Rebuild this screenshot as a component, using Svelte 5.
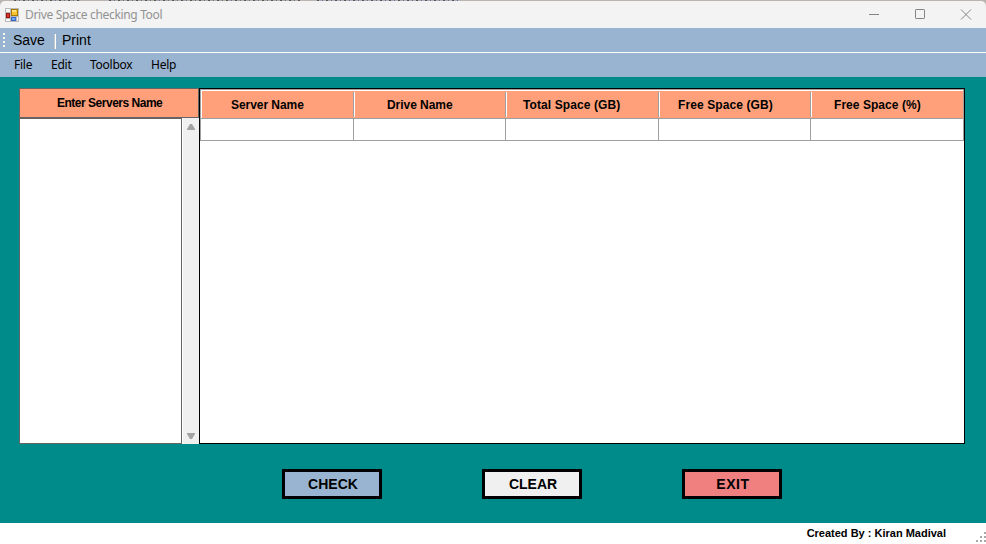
<script>
  const columns = [
    { name: 'Server Name', width: 152, pad: 30, spacing: -0.05 },
    { name: 'Drive Name', width: 152, pad: 34, spacing: -0.05 },
    { name: 'Total Space (GB)', width: 153, pad: 18, spacing: 0.1 },
    { name: 'Free Space (GB)', width: 152, pad: 20, spacing: 0.1 },
    { name: 'Free Space (%)', width: 153, pad: 24, spacing: 0.05 }
  ];
  const actions = [
    { name: 'CHECK', kind: 'check' },
    { name: 'CLEAR', kind: 'clear' },
    { name: 'EXIT', kind: 'exit' }
  ];
</script>

<div class="window">
  <header class="titlebar">
    <svg class="app-icon" width="14" height="14" viewBox="0 0 14 14" shape-rendering="crispEdges">
      <rect width="14" height="14" fill="#b9b9b9" />
      <rect x="1" y="1" width="4" height="3" fill="#f7f7f7" />
      <rect x="1" y="11" width="4" height="2" fill="#f7f7f7" />
      <rect x="12" y="9" width="1" height="4" fill="#f7f7f7" />
      <rect x="6" y="1" width="7" height="7" fill="#a87808" />
      <rect x="7" y="2" width="5" height="5" fill="#f6c42b" />
      <rect x="7" y="2" width="4" height="2" fill="#ffe07a" />
      <rect x="1" y="5" width="4" height="5" fill="#9c1712" />
      <rect x="2" y="6" width="2" height="3" fill="#d8372d" />
      <rect x="6" y="9" width="5" height="4" fill="#3569c8" />
      <rect x="7" y="10" width="3" height="2" fill="#75a6f6" />
    </svg>
    <span class="title">Drive Space checking Tool</span>
    <div class="controls">
      <svg width="12" height="12" viewBox="0 0 12 12"><path d="M1 5.5h10" /></svg>
      <svg width="12" height="12" viewBox="0 0 12 12"><rect x="1.5" y=".5" width="9" height="9" rx=".6" /></svg>
      <svg width="12" height="12" viewBox="0 0 12 12"><path d="M1 .5l10 10M11 .5L1 10.5" /></svg>
    </div>
  </header>

  <div class="toolbar">
    <div class="grip"><i></i><i></i><i></i><i></i></div>
    <span class="save">Save</span>
    <div class="separator"></div>
    <span class="print">Print</span>
  </div>

  <nav class="menu">
    <span style:width="37px">File</span>
    <span style:width="39px">Edit</span>
    <span style:width="61px">Toolbox</span>
    <span>Help</span>
  </nav>

  <main>
    <div class="panels">
      <section class="servers">
        <div class="servers-head"><span>Enter Servers Name</span></div>
        <div class="entry">
          <div class="field"></div>
          <div class="scrollbar">
            <svg width="8" height="6" viewBox="0 0 8 6"><path d="M0 6V5l3-5h2l3 5v1z" /></svg>
            <svg width="8" height="6" viewBox="0 0 8 6"><path d="M0 0v1l3 5h2l3-5V0z" /></svg>
          </div>
        </div>
      </section>
      <section class="grid">
        <div class="grid-head">
          {#each columns as col}
            <div class="th" style:width="{col.width}px" style:padding-left="{col.pad}px">
              <span style:letter-spacing="{col.spacing}px">{col.name}</span>
            </div>
          {/each}
        </div>
        <div class="grid-row">
          {#each columns as col}
            <div class="td" style:width="{col.width}px"></div>
          {/each}
        </div>
      </section>
    </div>
    <div class="actions">
      {#each actions as action}
        <button class={action.kind}>{action.name}</button>
      {/each}
    </div>
  </main>

  <footer>
    <span>Created By : Kiran Madival</span>
    <svg width="10" height="10" viewBox="0 0 10 10" shape-rendering="crispEdges">
      <path d="M8 0h2v2h-2zM4 4h2v2h-2zM8 4h2v2h-2zM0 8h2v2h-2zM4 8h2v2h-2zM8 8h2v2h-2z" fill="#a8a8a8" />
    </svg>
  </footer>
</div>

<style>
  * { box-sizing: border-box; }
  .window {
    width: 986px;
    height: 544px;
    display: flex;
    flex-direction: column;
    overflow: hidden;
    color: #000;
    padding-top: 1px;
    background:
      repeating-linear-gradient(90deg, #5c5652 0 2px, #a9a7ae 2px 5px, #6b7486 5px 6px, #b5b0ad 6px 9px) 14px 0 / 66px 1px no-repeat,
      repeating-linear-gradient(90deg, #5c5652 0 2px, #a9a7ae 2px 5px, #6b7486 5px 6px, #b5b0ad 6px 9px) 109px 0 / 191px 1px no-repeat,
      repeating-linear-gradient(90deg, #5c5652 0 2px, #a9abb8 2px 5px, #6b7486 5px 6px, #b0b2c0 6px 9px) 317px 0 / 143px 1px no-repeat,
      linear-gradient(#bab5b0 6px, #fff 6px);
    font-family: "Liberation Sans", Arial, sans-serif;
  }
  span { white-space: nowrap; }
  .titlebar {
    height: 27px;
    flex: none;
    display: flex;
    align-items: center;
    padding: 0 14px 0 5px;
    background: #f3f3f3;
    border-radius: 5px 5px 0 0;
  }
  .title {
    margin-left: 6px;
    font: 12px/16px "Noto Sans", sans-serif;
    color: #929292;
    letter-spacing: -0.34px;
  }
  .controls { margin-left: auto; display: flex; gap: 34px; }
  .controls:first-child { margin-right: 0; }
  .controls svg { display: block; fill: none; stroke: #858585; stroke-width: 1; }
  .toolbar {
    height: 25px;
    flex: none;
    display: flex;
    align-items: center;
    padding-left: 3px;
    background: #99b4d1;
    border-bottom: 1px solid #fff;
    font-size: 14px;
    line-height: 16px;
  }
  .grip { display: flex; flex-direction: column; gap: 2px; width: 10px; }
  .grip i { width: 2px; height: 2px; background: #f5f5f5; }
  .save { width: 41px; }
  .separator { width: 2px; height: 15px; margin: 2px 6px 0 0; background: #fff; border-left: 1px solid #c6c6c6; }
  .menu {
    height: 24px;
    flex: none;
    display: flex;
    align-items: center;
    padding-left: 14px;
    background: #99b4d1;
    font: 12px/16px "Noto Sans", sans-serif;
    letter-spacing: -0.25px;
  }
  main { height: 446px; flex: none; background: #008b8b; padding: 11px 21px 0 19px; }
  .panels { display: flex; height: 356px; }
  .servers { width: 180px; display: flex; flex-direction: column; }
  .servers-head {
    height: 30px;
    border: 1px solid #646464;
    background: #ffa07a;
    padding: 6px 0 0 37px;
    font-size: 12px;
    line-height: 16px;
    font-weight: 700;
  }
  .servers-head span { letter-spacing: -0.49px; }
  .entry { flex: 1; display: flex; }
  .field { width: 163px; border: 1px solid #646464; background: #fff; }
  .scrollbar {
    width: 17px;
    border-left: 1px solid #fff;
    background: #f0f0f0;
    display: flex;
    flex-direction: column;
    justify-content: space-between;
    align-items: center;
    padding: 6px 0 5px;
  }
  .scrollbar svg { fill: #a3a3a3; }
  .grid { width: 766px; border: 1px solid #000; background: #fff; }
  .grid-head {
    display: flex;
    height: 30px;
    border: 1px solid #a0a0a0;
    background: linear-gradient(#fff 1px, #ffa07a 1px);
  }
  .th {
    flex: none;
    padding-top: 7px;
    font-size: 12px;
    line-height: 16px;
    font-weight: 700;
    background: linear-gradient(90deg, #a0a0a0 1px, #fff 1px 2px, transparent 2px) 0 2px / 100% 25px no-repeat;
  }
  .th:first-child { background: linear-gradient(90deg, #fff 1px, transparent 1px); }
  .grid-row {
    display: flex;
    height: 22px;
    border: 1px solid #a0a0a0;
    border-top: 0;
  }
  .td { flex: none; border-left: 1px solid #a0a0a0; }
  .td:first-child { border-left: 0; }
  .actions { display: flex; gap: 100px; padding: 25px 0 0 263px; }
  button {
    width: 100px;
    height: 30px;
    margin: 0;
    padding: 0 0 0 2px;
    border: 3px solid #000;
    border-radius: 0;
    color: #000;
    font: 700 14px/16px "Liberation Sans", Arial, sans-serif;
  }
  .check { background: #99b4d1; }
  .clear { background: #f0f0f0; }
  .exit { background: #f08080; letter-spacing: 0.6px; }
  footer {
    flex: 1;
    display: flex;
    justify-content: flex-end;
    background: #fff;
    font-size: 11px;
    line-height: 14px;
    font-weight: 700;
    padding-top: 3px;
  }
  footer svg { margin: 6px 0 0 30px; }
</style>
